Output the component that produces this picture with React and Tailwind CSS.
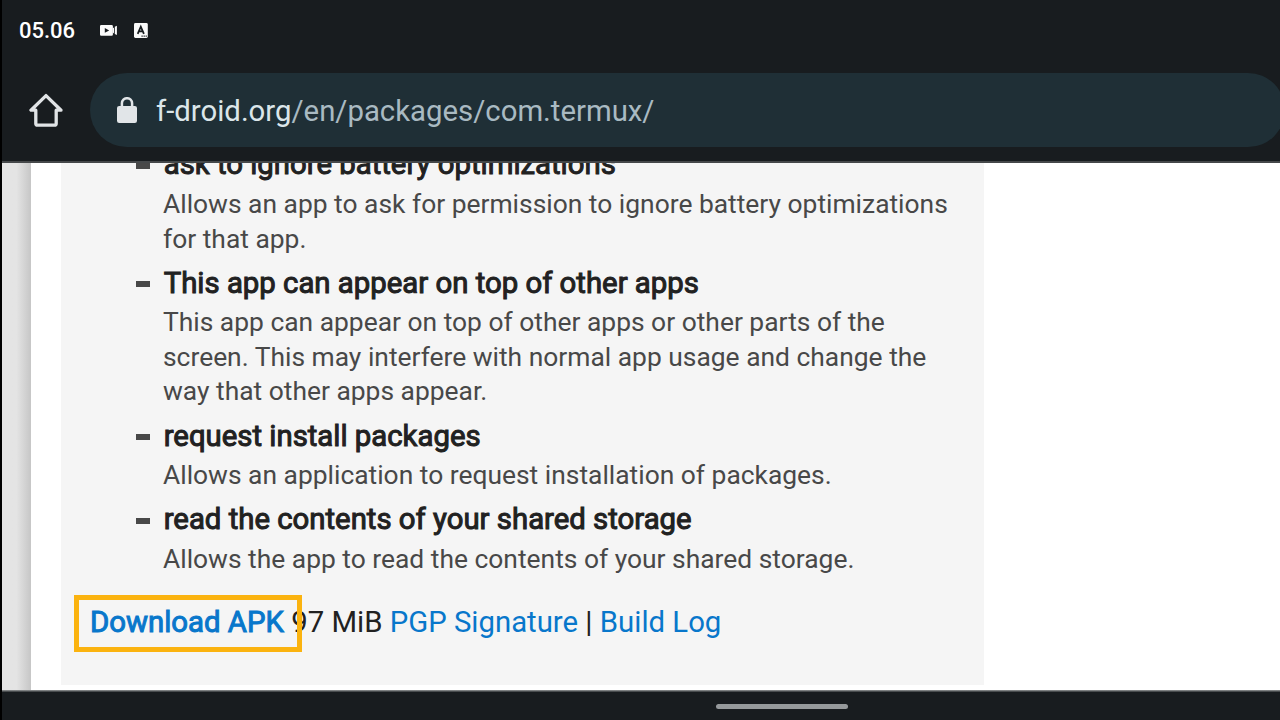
const permissions = [
  {
    title: "ask to ignore battery optimizations",
    lines: ["Allows an app to ask for permission to ignore battery optimizations", "for that app."],
  },
  {
    title: "This app can appear on top of other apps",
    lines: [
      "This app can appear on top of other apps or other parts of the",
      "screen. This may interfere with normal app usage and change the",
      "way that other apps appear.",
    ],
  },
  {
    title: "request install packages",
    lines: ["Allows an application to request installation of packages."],
  },
  {
    title: "read the contents of your shared storage",
    lines: ["Allows the app to read the contents of your shared storage."],
  },
];

function StatusBar() {
  return (
    <div className="flex h-[60px] items-center pl-[17px]">
      <span className="pt-[2px] text-[22px] leading-[26px] font-medium text-white">05.06</span>
      <svg className="ml-[24.5px] h-[11px] w-[18px]" viewBox="0 0 18 11">
        <path
          fillRule="evenodd"
          fill="#fafafa"
          d="M1.3 0H11.6Q12.9 0 12.9 1.3V9.5Q12.9 10.8 11.6 10.8H1.3Q0 10.8 0 9.5V1.3Q0 0 1.3 0ZM4.8 3V7.8L9.2 5.4Z"
        />
        <path fill="#fafafa" d="M12.9 3.2L14 2.4V8.4L12.9 7.6ZM14.8 1.8L16.9 .8V10L14.8 9Z" />
      </svg>
      <svg className="ml-[16px] h-[15px] w-[14px]" viewBox="0 0 14 15">
        <rect width="13.8" height="15" rx="1.4" fill="#fafafa" />
        <path d="M3.7 10.8L6.8 3.7L9.9 10.8M4.9 8.4H8.7" fill="none" stroke="#171c1f" strokeWidth="1.8" />
        <path d="M7.5 13.2h1.2M9.6 13.2h1.2M11.6 13.2h1.2" stroke="#171c1f" strokeWidth="1.2" />
      </svg>
    </div>
  );
}

function AddressBar() {
  return (
    <div className="flex h-[101px] items-start pt-[13px]">
      <svg className="mt-[19px] ml-[27px] h-[36px] w-[34px] shrink-0" viewBox="0 0 34 36">
        <path
          d="M2 18.2H6.8V31.4Q6.8 33.2 8.6 33.2H25.4Q27.2 33.2 27.2 31.4V18.2H32L17 3.6Z"
          fill="none"
          stroke="#e1e4e6"
          strokeWidth="3.3"
          strokeLinejoin="round"
        />
      </svg>
      <div className="ml-[27px] flex h-[74px] w-[1195px] shrink-0 items-center rounded-full bg-[#1f2f36] pl-[27px]">
        <svg className="-mt-px h-[26px] w-[20px] shrink-0" viewBox="0 0 20 26">
          <path d="M4.9 10V6.3A5.1 5.1 0 0 1 15.1 6.3V10" fill="none" stroke="#e1e5e8" strokeWidth="2.5" />
          <rect y="8.9" width="20" height="17" rx="2.2" fill="#e1e5e8" />
        </svg>
        <span className="ml-[19px] pt-[2px] text-[29.33px] leading-[36px] whitespace-nowrap text-[#a9bac2]">
          <span className="text-[#dbe6ea]">f-droid.org</span>/en/packages/com.termux/
        </span>
      </div>
    </div>
  );
}

function Permission({ title, lines }) {
  return (
    <li className="mb-[7.6px] flex">
      <span className="mt-[17.5px] mr-[13px] h-[6px] w-[14px] shrink-0 bg-[#484848]" />
      <div>
        <h3 className="pl-[0.7px] text-[29.33px] leading-[38.13px] whitespace-nowrap text-[#212121] [-webkit-text-stroke:1px_#212121]">
          {title}
        </h3>
        <p className="mt-[3.6px] text-[26.4px] leading-[34.5px] whitespace-nowrap text-[#484848]">
          {lines.map((line) => (
            <span key={line} className="block">
              {line}
            </span>
          ))}
        </p>
      </div>
    </li>
  );
}

export default function App() {
  return (
    <div className="flex h-[720px] w-[1280px] overflow-hidden bg-[#181c1f] font-['Roboto',sans-serif]">
      <div className="w-[2px] shrink-0 bg-black" />
      <div className="flex min-w-0 flex-1 flex-col">
        <header className="h-[161px] shrink-0">
          <StatusBar />
          <AddressBar />
        </header>
        <div className="h-[2px] shrink-0 bg-[#45484a]" />
        <main className="flex h-[527px] shrink-0 overflow-hidden bg-white">
          <div className="w-[29px] shrink-0 bg-linear-to-r from-[#e4e4e4] from-50% to-[#c6c6c6]" />
          <section className="ml-[30px] h-[522px] w-[923px] shrink-0 bg-[#f5f5f5]">
            <ul className="-mt-[17.55px] flex flex-col pl-[75px]">
              {permissions.map((p) => (
                <Permission key={p.title} {...p} />
              ))}
            </ul>
            <div className="relative mt-[18.7px] pl-[29px] text-[29.33px] leading-[38.13px] whitespace-nowrap text-[#212121]">
              <a className="text-[#0877cb] [-webkit-text-stroke:1px_#0877cb]">Download APK</a> 97 MiB{" "}
              <a className="text-[#0877cb]">PGP Signature</a> | <a className="text-[#0877cb]">Build Log</a>
              <div className="absolute -top-[8px] left-[13px] h-[57px] w-[228px] border-[5px] border-[#fbb30f]" />
            </div>
          </section>
        </main>
        <div className="h-[2px] shrink-0 bg-linear-to-b from-[#9a9c9d] to-[#303436]" />
        <footer className="flex flex-1 items-start pt-[12px] pl-[714px]">
          <div className="h-[5px] w-[132px] rounded-full bg-[#95999b]" />
        </footer>
      </div>
    </div>
  );
}
